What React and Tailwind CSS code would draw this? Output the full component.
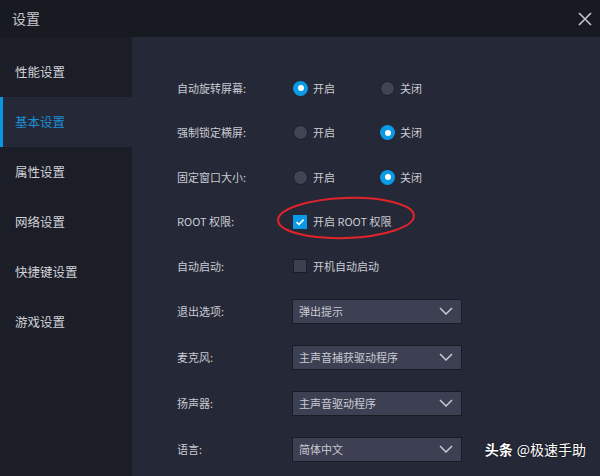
import React from "react";

const font = { fontFamily: '"Noto Sans CJK SC", "Noto Sans", sans-serif' };

const navItems = ["性能设置", "基本设置", "属性设置", "网络设置", "快捷键设置", "游戏设置"];

const Radio = ({ checked, label }) => (
  <div className="flex items-center w-[87px]">
    {checked ? (
      <span className="shrink-0 w-[15px] h-[15px] rounded-full bg-[#0a9be6] flex items-center justify-center">
        <span className="w-[6px] h-[6px] rounded-full bg-white"></span>
      </span>
    ) : (
      <span className="shrink-0 block w-[15px] h-[15px] rounded-full bg-[#414452] border border-[#1b1d25]"></span>
    )}
    <span className="ml-[5px]">{label}</span>
  </div>
);

const Checkbox = ({ checked, label }) => (
  <div className="flex items-center">
    {checked ? (
      <span className="shrink-0 w-[14px] h-[14px] bg-[#0a9be6] flex items-center justify-center">
        <svg width="10" height="10" viewBox="0 0 10 10">
          <path d="M1.5 5.2 L4 7.5 L8.6 2.6" stroke="white" strokeWidth="1.6" fill="none" />
        </svg>
      </span>
    ) : (
      <span className="shrink-0 block w-[14px] h-[14px] bg-[#3d404e] border border-[#1b1d25]"></span>
    )}
    <span className="ml-[6px]">{label}</span>
  </div>
);

const Select = ({ value }) => (
  <div className="w-[170px] h-[25px] bg-[#3d4053] border border-[#1a1c24] flex items-center justify-between pl-[6px] pr-[8px]">
    <span>{value}</span>
    <svg width="14" height="8" viewBox="0 0 14 8">
      <path d="M1 1 L7 7 L13 1" stroke="#c8cad2" strokeWidth="1.5" fill="none" />
    </svg>
  </div>
);

const Row = ({ label, children, tall }) => (
  <div className={`flex items-center ${tall ? "h-[46px]" : "h-[44.5px]"}`}>
    <span className="w-[115px]">{label}</span>
    {children}
  </div>
);

const App = () => {
  return (
    <div className="w-[600px] h-[476px] bg-[#181a22] flex flex-col overflow-hidden text-[#c9cbd2]" style={font}>
      <div className="h-[37px] flex items-center justify-between pl-[12px] pr-[8px]">
        <span className="text-[14px] text-[#c4c6cc]">设置</span>
        <svg width="14" height="14" viewBox="0 0 14 14">
          <path d="M1 1 L13 13 M13 1 L1 13" stroke="#c4c6cc" strokeWidth="1.6" />
        </svg>
      </div>
      <div className="flex flex-1">
        <div className="w-[132px] bg-[#1c1e27] pt-[10px]">
          {navItems.map((item, i) =>
            i === 1 ? (
              <div key={item} className="h-[50px] flex items-center bg-[#252836] border-l-[3px] border-[#0a97e0] pl-[12px] text-[12.5px] text-[#1a8fd4]">
                {item}
              </div>
            ) : (
              <div key={item} className="h-[50px] flex items-center pl-[15px] text-[12.5px] text-[#d0d2d8]">
                {item}
              </div>
            )
          )}
        </div>
        <div className="flex-1 bg-[#252836] pl-[45px] pt-[28.75px] text-[11px] relative">
          <Row label="自动旋转屏幕:">
            <div className="flex ml-[1px]">
              <Radio checked label="开启" />
              <Radio label="关闭" />
            </div>
          </Row>
          <Row label="强制锁定横屏:">
            <div className="flex ml-[1px]">
              <Radio label="开启" />
              <Radio checked label="关闭" />
            </div>
          </Row>
          <Row label="固定窗口大小:">
            <div className="flex ml-[1px]">
              <Radio label="开启" />
              <Radio checked label="关闭" />
            </div>
          </Row>
          <Row label="ROOT 权限:">
            <div className="ml-[1px]">
              <Checkbox checked label="开启 ROOT 权限" />
            </div>
          </Row>
          <Row label="自动启动:">
            <div className="ml-[1px]">
              <Checkbox label="开机自动启动" />
            </div>
          </Row>
          <Row tall label="退出选项:">
            <Select value="弹出提示" />
          </Row>
          <Row tall label="麦克风:">
            <Select value="主声音捕获驱动程序" />
          </Row>
          <Row tall label="扬声器:">
            <Select value="主声音驱动程序" />
          </Row>
          <Row tall label="语言:">
            <Select value="简体中文" />
          </Row>
          <svg className="absolute left-[143px] top-[159px]" width="142" height="44" viewBox="0 0 142 44">
            <ellipse cx="71" cy="22" rx="68" ry="20" stroke="#e2232b" strokeWidth="2" fill="none" transform="rotate(-2 71 22)" />
          </svg>
          <div className="absolute right-[14px] bottom-[16px] text-[14px] text-white flex items-center [text-shadow:0_0_2px_rgba(0,0,0,0.8)]">
            <span className="font-bold">头条</span>
            <span className="ml-[4px]">@极速手助</span>
          </div>
        </div>
      </div>
    </div>
  );
};

export default App;
